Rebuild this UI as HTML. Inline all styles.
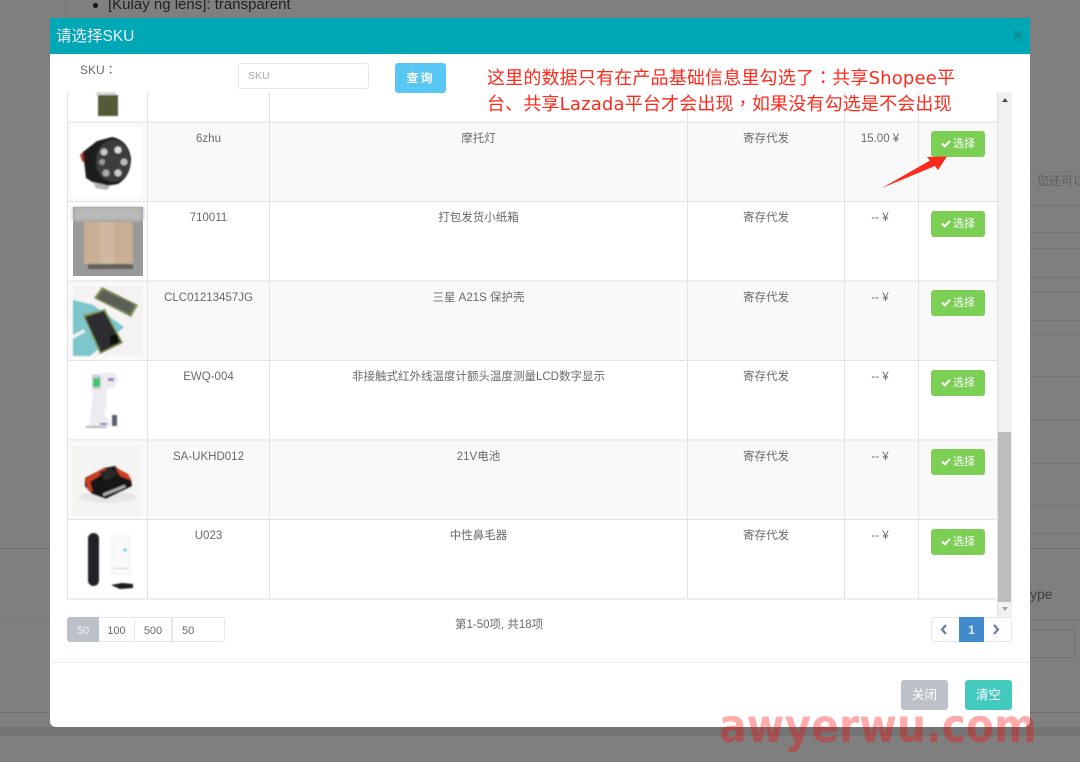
<!DOCTYPE html>
<html><head><meta charset="utf-8">
<style>
html,body{margin:0;padding:0}
body{width:1080px;height:762px;position:relative;overflow:hidden;background:#7f7f7f;font-family:"Liberation Sans","Noto Sans CJK SC",sans-serif;color:#676a6c;font-size:12px}
.a{position:absolute}
.l{position:absolute;background:#6e6e6e;height:1px}
.hl{position:absolute;left:67px;width:930px;height:1px;background:#e3e3e3}
.hl2{position:absolute;left:67px;width:930px;height:2px;background:#eeeeee}
.vl{position:absolute;top:92px;height:507px;width:1px;background:#e3e3e3}
.c{position:absolute;text-align:center;line-height:16px;font-size:11.500px;color:#676a6c;white-space:nowrap}
.btn{position:absolute;left:931px;width:54px;height:26px;background:#7ccf55;border-radius:3px;color:#fff;font-size:11px;line-height:26px;text-align:center}
.btn svg{vertical-align:-1px;margin-right:2px}
.row{position:absolute;left:67px;width:930px;background:#f9f9f9}
.pg{position:absolute;top:617px;height:25px;background:#fff;border:1px solid #e6e8ea;box-sizing:border-box;text-align:center;line-height:26px;font-size:11px;color:#676a6c}
.tc{font-family:"Noto Sans CJK TC",sans-serif}
</style></head>
<body>
<!-- background page -->
<div class="a" style="left:65px;top:0;width:1px;height:18px;background:#767676"></div>
<div class="a" style="left:93px;top:3px;width:5px;height:5px;border-radius:50%;background:#111"></div>
<div class="a" style="left:108px;top:-4px;font-size:15px;line-height:18px;color:#222;white-space:nowrap">[Kulay ng lens]: transparent</div>
<div class="l" style="left:0;top:548px;width:50px"></div>
<div class="l" style="left:0;top:619px;width:50px;background:#767676"></div>
<div class="l" style="left:0;top:712px;width:50px"></div>
<div class="a" style="left:0;top:727px;width:1080px;height:9px;background:#747474"></div>
<div class="l" style="left:1030px;top:172px;width:50px;background:#777"></div>
<div class="l" style="left:1030px;top:205px;width:50px;background:#747474"></div>
<div class="l" style="left:1030px;top:232px;width:50px;background:#747474"></div>
<div class="l" style="left:1030px;top:248px;width:50px;background:#747474"></div>
<div class="l" style="left:1030px;top:277px;width:50px;background:#747474"></div>
<div class="l" style="left:1030px;top:291px;width:50px;background:#747474"></div>
<div class="l" style="left:1030px;top:320px;width:50px;background:#747474"></div>
<div class="l" style="left:1030px;top:334px;width:50px;background:#747474"></div>
<div class="l" style="left:1030px;top:376px;width:50px;background:#747474"></div>
<div class="l" style="left:1030px;top:420px;width:50px;background:#747474"></div>
<div class="l" style="left:1030px;top:463px;width:50px;background:#747474"></div>
<div class="l" style="left:1030px;top:505px;width:50px;background:#747474"></div>
<div class="l" style="left:1030px;top:533px;width:50px;background:#747474"></div>
<div class="l" style="left:1030px;top:548px;width:50px"></div>
<div class="l" style="left:1030px;top:619px;width:50px;background:#747474"></div>
<div class="l" style="left:1030px;top:712px;width:50px"></div>
<div class="a" style="left:1025px;top:173px;font-size:12px;line-height:16px;color:#5e5e5e;white-space:nowrap">，您还可以填</div>
<div class="a" style="left:1030px;top:585px;font-size:14px;line-height:18px;color:#3f3f3f">ype</div>
<div class="a" style="left:1020px;top:629px;width:55px;height:29px;border:1px solid #707070;border-radius:3px;box-sizing:border-box"></div>

<!-- modal -->
<div class="a" style="left:50px;top:18px;width:980px;height:709px;background:#fff;border-radius:0 0 6px 6px"></div>
<div class="a" style="left:50px;top:18px;width:980px;height:36px;background:#00a7b4"></div>
<div class="a" style="left:56px;top:27px;font-size:15.500px;line-height:20px;color:#eef;white-space:nowrap">请选择SKU</div>
<svg class="a" style="left:1012px;top:29px" width="12" height="12" viewBox="0 0 12 12"><path d="M2 2L10 10M10 2L2 10" stroke="#0b8b97" stroke-width="2" fill="none"/></svg>

<!-- rows -->
<div class="row" style="top:122px;height:80px"></div>
<div class="row" style="top:281px;height:80px"></div>
<div class="row" style="top:440px;height:80px"></div>
<div class="hl2" style="top:121px"></div>
<div class="hl" style="top:201px"></div>
<div class="hl2" style="top:280px"></div>
<div class="hl" style="top:360px"></div>
<div class="hl2" style="top:439px"></div>
<div class="hl" style="top:519px"></div>
<div class="hl2" style="top:598px"></div>
<div class="vl" style="left:67px"></div>
<div class="vl" style="left:147px"></div>
<div class="vl" style="left:269px"></div>
<div class="vl" style="left:687px"></div>
<div class="vl" style="left:844px"></div>
<div class="vl" style="left:918px"></div>

<!-- scrollbar -->
<div class="a" style="left:997px;top:92px;width:15px;height:525px;background:#f1f1f1;border-left:1px solid #e3e3e3;box-sizing:border-box"></div>
<div class="a" style="left:998px;top:432px;width:13px;height:170px;background:#bdbdbd"></div>
<div class="a" style="left:1002px;top:98px;width:0;height:0;border-left:3.500px solid transparent;border-right:3.500px solid transparent;border-bottom:4px solid #505050"></div>
<div class="a" style="left:1001.500px;top:607px;width:0;height:0;border-left:3.500px solid transparent;border-right:3.500px solid transparent;border-top:4px solid #a3a3a3"></div>

<!-- search bar -->
<div class="a" style="left:67px;top:54px;width:930px;height:38px;background:#fff"></div>
<div class="a" style="left:80px;top:62px;font-size:12px;line-height:16px;color:#676a6c;white-space:nowrap">SKU<span class="tc">：</span></div>
<div class="a" style="left:238px;top:63px;width:131px;height:26px;border:1px solid #e5e6e7;border-radius:3px;box-sizing:border-box;background:#fff;color:#aaa;font-size:10.500px;line-height:24px;padding-left:9px">SKU</div>
<div class="a" style="left:395px;top:63px;width:51px;height:30px;background:#59c7f4;border-radius:3px;color:#fff;font-size:12px;font-weight:bold;line-height:30px;text-align:center;letter-spacing:2px">查询</div>

<!-- images -->
<svg class="a" style="left:0;top:0" width="1080" height="762" viewBox="0 0 1080 762">
<defs>
<filter id="b1" x="-10%" y="-10%" width="120%" height="120%"><feGaussianBlur stdDeviation="0.7"/></filter>
<filter id="b2" x="-10%" y="-10%" width="120%" height="120%"><feGaussianBlur stdDeviation="2"/></filter>
</defs>
<!-- cropped top image -->
<g filter="url(#b1)">
<rect x="96" y="92" width="20" height="4" fill="#d8d8d8"/>
<rect x="98" y="95" width="20" height="21" fill="#525a38"/>
</g>
<!-- motorcycle lamp -->
<rect x="71" y="127" width="70" height="70" fill="#fff"/>
<g filter="url(#b1)">
<path d="M80 155 L84 151 L87 157 L85 163 L82 161 Z" fill="#b23a2e"/>
<path d="M83 152 L97 141 L112 137 Q128 140 131 158 Q131 176 118 184 L100 187 L86 178 Z" fill="#1e1e1e"/>
<ellipse cx="113" cy="161" rx="17" ry="21" fill="#3d3d3d"/>
<circle cx="104" cy="152" r="3.500" fill="#c9c9c9"/><circle cx="118" cy="150" r="3.500" fill="#ddd"/>
<circle cx="124" cy="162" r="3.500" fill="#bbb"/><circle cx="118" cy="173" r="3.500" fill="#ccc"/>
<circle cx="106" cy="173" r="3.500" fill="#aaa"/><circle cx="102" cy="162" r="3" fill="#999"/>
<path d="M93 182 L110 186 L107 190 L96 188Z" fill="#b5b5b5"/>
</g>
<!-- box -->
<rect x="73" y="207" width="70" height="69" fill="#999"/>
<rect x="73" y="207" width="70" height="14" fill="#b9b9b9" filter="url(#b2)"/>
<g filter="url(#b1)">
<rect x="88" y="263" width="45" height="6" fill="#64625c"/>
<rect x="84" y="222" width="49" height="42" fill="#c8ae92"/>
<rect x="100" y="222" width="14" height="42" fill="#cfb89e"/>
</g>
<!-- phone cases -->
<rect x="73" y="286" width="70" height="70" fill="#f5f2f3"/>
<g filter="url(#b1)">
<path d="M73 300 L93 305 L124 327 L90 356 L73 356 Z" fill="#7cc6cc"/>
<path d="M73 335 L84 329 L85 332 L73 339Z" fill="#f2f2f2"/>
<path d="M94 298 L102 287 L138 305 L131 317 Z" fill="#7c8c55"/>
<path d="M97 298 L103 290 L135 305 L130 314 Z" fill="#5a5f58"/>
<path d="M83 315 L105 309 L123 343 L100 354 Z" fill="#7e9455"/>
<path d="M85 317 L104 311 L121 342 L101 352 Z" fill="#2f2f31"/>
<rect x="110" y="335" width="8" height="9" fill="#111"/>
</g>
<!-- thermometer -->
<g filter="url(#b1)">
<path d="M92 374 L113 372 Q119 376 118 382 L114 387 L107 389 L105 415 L110 421 L110 428 L89 428 L93 395 L92 388Z" fill="#ecebef"/>
<rect x="92" y="375" width="9" height="14" rx="2" fill="#ccd"/>
<rect x="93" y="378" width="7" height="9" fill="#45c56a"/>
<rect x="108" y="378" width="6" height="3" fill="#a070c8"/>
<rect x="112" y="415" width="5" height="11" fill="#5a6270"/>
<rect x="86" y="426" width="20" height="2" fill="#b7b7b7"/>
<rect x="100" y="423" width="7" height="2" fill="#9367c4"/>
</g>
<!-- battery -->
<rect x="73" y="446" width="68" height="70" fill="#f4f4f3"/>
<g filter="url(#b1)">
<ellipse cx="108" cy="497" rx="28" ry="6" fill="#e6e6e6"/>
<path d="M85 478 L104 468 L115 466 L131 480 L132 486 L106 499 L92 494 L85 486Z" fill="#181818"/>
<path d="M85 479 L104 468 L108 470 L90 482 L93 492 L88 490Z" fill="#cf3d22"/>
<path d="M115 467 L128 474 L132 481 L120 476Z" fill="#cf3d22"/>
<path d="M99 472 L111 468 L118 474 L106 481Z" fill="#2a2a2a"/>
<rect x="102" y="489" width="24" height="3" fill="#aaa" transform="rotate(-22 114 490)"/>
</g>
<!-- nose trimmer -->
<g filter="url(#b1)">
<rect x="88" y="533" width="11" height="53" rx="5.500" fill="#232325"/>
<rect x="112" y="536" width="18" height="38" fill="#fafafa" stroke="#efefef"/>
<circle cx="125" cy="550" r="2" fill="#8ad8dc"/>
<rect x="114" y="568" width="14" height="1" fill="#ccc"/>
<path d="M111 585 L122 583 L133 584 L133 588 L120 589Z" fill="#1c1c1c"/>
</g>
</svg>

<!-- table text -->
<div class="c" style="left:148px;width:121px;top:131px">6zhu</div>
<div class="c" style="left:270px;width:417px;top:131px">摩托灯</div>
<div class="c" style="left:688px;width:156px;top:131px">寄存代发</div>
<div class="c" style="left:845px;width:70px;top:131px">15.00 ¥</div>

<div class="c" style="left:148px;width:121px;top:210px">710011</div>
<div class="c" style="left:270px;width:417px;top:210px">打包发货小纸箱</div>
<div class="c" style="left:688px;width:156px;top:210px">寄存代发</div>
<div class="c" style="left:845px;width:70px;top:210px">-- ¥</div>

<div class="c" style="left:148px;width:121px;top:290px">CLC01213457JG</div>
<div class="c" style="left:270px;width:417px;top:290px">三星 A21S 保护壳</div>
<div class="c" style="left:688px;width:156px;top:290px">寄存代发</div>
<div class="c" style="left:845px;width:70px;top:290px">-- ¥</div>

<div class="c" style="left:148px;width:121px;top:369px">EWQ-004</div>
<div class="c" style="left:270px;width:417px;top:369px">非接触式红外线温度计额头温度测量LCD数字显示</div>
<div class="c" style="left:688px;width:156px;top:369px">寄存代发</div>
<div class="c" style="left:845px;width:70px;top:369px">-- ¥</div>

<div class="c" style="left:148px;width:121px;top:449px">SA-UKHD012</div>
<div class="c" style="left:270px;width:417px;top:449px">21V电池</div>
<div class="c" style="left:688px;width:156px;top:449px">寄存代发</div>
<div class="c" style="left:845px;width:70px;top:449px">-- ¥</div>

<div class="c" style="left:148px;width:121px;top:528px">U023</div>
<div class="c" style="left:270px;width:417px;top:528px">中性鼻毛器</div>
<div class="c" style="left:688px;width:156px;top:528px">寄存代发</div>
<div class="c" style="left:845px;width:70px;top:528px">-- ¥</div>

<!-- buttons -->
<div class="btn" style="top:131px"><svg width="10" height="9" viewBox="0 0 10 9"><path d="M1 4.500L3.800 7.300L9 1.800" fill="none" stroke="#fff" stroke-width="2"/></svg>选择</div>
<div class="btn" style="top:211px"><svg width="10" height="9" viewBox="0 0 10 9"><path d="M1 4.500L3.800 7.300L9 1.800" fill="none" stroke="#fff" stroke-width="2"/></svg>选择</div>
<div class="btn" style="top:290px"><svg width="10" height="9" viewBox="0 0 10 9"><path d="M1 4.500L3.800 7.300L9 1.800" fill="none" stroke="#fff" stroke-width="2"/></svg>选择</div>
<div class="btn" style="top:370px"><svg width="10" height="9" viewBox="0 0 10 9"><path d="M1 4.500L3.800 7.300L9 1.800" fill="none" stroke="#fff" stroke-width="2"/></svg>选择</div>
<div class="btn" style="top:449px"><svg width="10" height="9" viewBox="0 0 10 9"><path d="M1 4.500L3.800 7.300L9 1.800" fill="none" stroke="#fff" stroke-width="2"/></svg>选择</div>
<div class="btn" style="top:529px"><svg width="10" height="9" viewBox="0 0 10 9"><path d="M1 4.500L3.800 7.300L9 1.800" fill="none" stroke="#fff" stroke-width="2"/></svg>选择</div>

<!-- arrow over button -->
<svg class="a" style="left:0;top:0" width="1080" height="762" viewBox="0 0 1080 762">
<path d="M882 188 L930 160.500 L927 157 L947 156.500 L938 170 L935 166Z" fill="#ff2a1c"/>
</svg>

<!-- annotation -->
<div class="a" style="left:487px;top:65px;width:490px;font-size:18px;line-height:25px;letter-spacing:.17px;color:#ff2a1c;white-space:nowrap;font-family:'DejaVu Sans','Noto Sans CJK SC',sans-serif">这里的数据只有在产品基础信息里勾选了<span class="tc">：</span>共享Shopee平<br>台、共享Lazada平台才会出现<span class="tc">，</span>如果没有勾选是不会出现</div>

<!-- pagination -->
<div class="pg" style="left:67px;width:32px;background:#bcc2c7;border-color:#bcc2c7;color:#f1f1f1;border-radius:3px 0 0 3px">50</div>
<div class="pg" style="left:99px;width:36px;border-left:0">100</div>
<div class="pg" style="left:135px;width:37px;border-left:0">500</div>
<div class="pg" style="left:172px;width:53px;text-align:left;padding-left:9px;border-radius:0 3px 3px 0">50</div>
<div class="a" style="left:455px;top:617px;font-size:11.500px;line-height:16px;color:#676a6c;white-space:nowrap">第1-50项, 共18项</div>

<div class="a" style="left:931px;top:617px;width:81px;height:25px;border:1px solid #e6e8ea;border-radius:3px;box-sizing:border-box;background:#fff"></div>
<div class="a" style="left:959px;top:617px;width:25px;height:25px;background:#428bca;color:#e8f0f8;font-size:12px;font-weight:bold;line-height:26px;text-align:center">1</div>
<svg class="a" style="left:931px;top:617px" width="81" height="25" viewBox="0 0 81 25">
<path d="M15 8 L11 12.500 L15 17" fill="none" stroke="#6a7f9c" stroke-width="2.200"/>
<path d="M63 8 L67 12.500 L63 17" fill="none" stroke="#6a7f9c" stroke-width="2.200"/>
</svg>

<!-- footer -->
<div class="a" style="left:50px;top:662px;width:980px;height:1px;background:#ececec"></div>
<div class="a" style="left:901px;top:680px;width:47px;height:30px;background:#bcc2c7;border-radius:3px;color:#fff;font-size:12.500px;line-height:30px;text-align:center">关闭</div>
<div class="a" style="left:965px;top:680px;width:47px;height:30px;background:#43cabd;border-radius:3px;color:#fff;font-size:12.500px;line-height:30px;text-align:center">清空</div>

<!-- watermark -->
<div class="a" style="left:719px;top:700px;font-family:'DejaVu Sans',sans-serif;font-size:46px;font-weight:bold;line-height:52px;color:rgba(255,0,0,.33);white-space:nowrap;transform-origin:0 0;transform:scaleX(.89)">awyerwu.com</div>
</body></html>
